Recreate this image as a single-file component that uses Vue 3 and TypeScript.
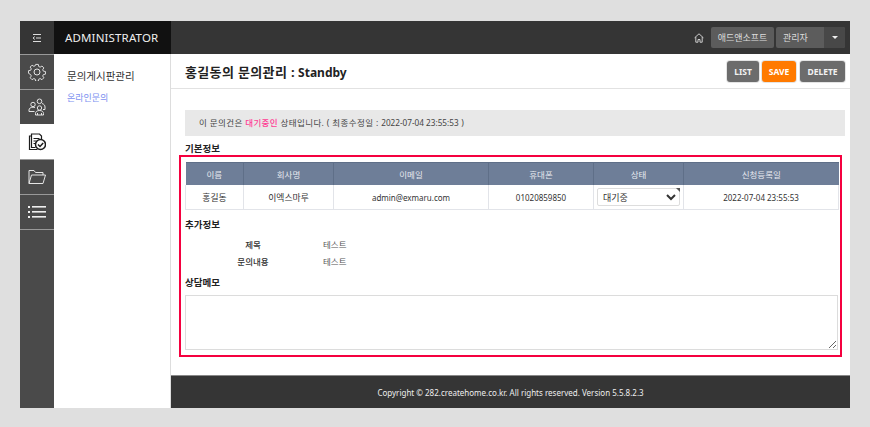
<script setup lang="ts">
const heads = ['이름', '회사명', '이메일', '휴대폰', '상태', '신청등록일']
const widths = [58, 90, 155, 105, 90, 155]
const extra = [
  { k: '제목', v: '테스트' },
  { k: '문의내용', v: '테스트' },
]
</script>

<template>
  <div class="page">
    <div class="win">
      <nav class="rail">
        <div class="rail-top">
          <svg width="10" height="10" viewBox="0 0 10 10" fill="none" stroke="#ddd" stroke-width="1">
            <path d="M1 1.500h8M4 5h5M1 8.500h8M2.800 3.600 1 5l1.800 1.400" />
          </svg>
        </div>
        <div class="rail-item">
          <svg width="18" height="18" viewBox="0 0 18 18" fill="none" stroke="#e4e4e4" stroke-width="1">
            <circle cx="9" cy="9" r="3" />
            <path d="M7.600 1h2.800l.4 2.200 1.500.7 1.900-1.200 2 2-1.200 1.900.7 1.500 2.200.4v2.800l-2.200.4-.7 1.500 1.200 1.900-2 2-1.900-1.200-1.500.7-.4 2.200H7.600l-.4-2.200-1.500-.7-1.900 1.200-2-2 1.200-1.900-.7-1.500L.1 10.400V7.600l2.200-.4.7-1.500L1.800 3.800l2-2 1.900 1.200 1.500-.7z" transform="translate(.45 .45) scale(.95)" />
          </svg>
        </div>
        <div class="rail-item">
          <svg width="18" height="18" viewBox="0 0 18 18" fill="none" stroke="#e4e4e4" stroke-width="1">
            <circle cx="11.500" cy="3.300" r="2.300" />
            <circle cx="5" cy="6.500" r="2.200" />
            <circle cx="11.500" cy="10" r="2.200" />
            <path d="M14 5.500c2 .6 3 1.900 3 3.500v2.500h-2M1 13.500V12c0-1.600 1.500-2.800 4-2.800 .8 0 1.500.2 2 .5M6.500 13.500H1M7.500 17v-1.500c0-1.800 1.600-3 4-3s4 1.200 4 3V17zM9.500 17v-2M13.500 17v-2" />
          </svg>
        </div>
        <div class="rail-item active">
          <svg width="18" height="18" viewBox="0 0 18 18" fill="none" stroke="#1c1c1c" stroke-width="1.200">
            <path d="M3.500 3V1h8l2 2v3M3.500 3H1.500v13.500h8" />
            <path d="M3.500 3v11.500h4M5.500 5.500h6M5.500 8h3M5.500 10.500h2" />
            <circle cx="12.500" cy="11.500" r="5" stroke-width="1.500" />
            <path d="M10 11.500l2 2 3.200-3.500" stroke-width="1.500" />
          </svg>
        </div>
        <div class="rail-item">
          <svg width="18" height="16" viewBox="0 0 18 16" fill="none" stroke="#e4e4e4" stroke-width="1">
            <path d="M1 14.500V1.500h5l1.500 2H15v2.500" />
            <path d="M1 14.500 3.500 6h14L15 14.500z" />
          </svg>
        </div>
        <div class="rail-item">
          <svg width="18" height="14" viewBox="0 0 18 14" fill="#eee">
            <rect x="0" y="1" width="2" height="2" />
            <rect x="4" y="1" width="14" height="1.600" />
            <rect x="0" y="6" width="2" height="2" />
            <rect x="4" y="6" width="14" height="1.600" />
            <rect x="0" y="11" width="2" height="2" />
            <rect x="4" y="11" width="14" height="1.600" />
          </svg>
        </div>
        <div class="rail-rest"></div>
      </nav>

      <aside class="side">
        <div class="brand">ADMINISTRATOR</div>
        <div class="side-body">
          <div class="side-title">문의게시판관리</div>
          <a class="side-link">온라인문의</a>
        </div>
      </aside>

      <div class="main">
        <header class="topbar">
          <svg class="home" width="10" height="10" viewBox="0 0 10 10" fill="none" stroke="#ddd" stroke-width=".9">
            <path d="M.6 4.800 5 .8l4.400 4M1.800 4v5.200h2.200V6.500h2v2.700h2.200V4" />
          </svg>
          <span class="tb-btn shop">애드앤소프트</span>
          <span class="tb-split">
            <span class="tb-name">관리자</span>
            <span class="tb-caret"><i></i></span>
          </span>
        </header>

        <section class="titlebar">
          <h1><span class="h1-ko">홍길동의 문의관리 :</span> Standby</h1>
          <div class="actions">
            <button class="btn list">LIST</button>
            <button class="btn save">SAVE</button>
            <button class="btn del">DELETE</button>
          </div>
        </section>

        <section class="content">
          <div class="notice">
            이 문의건은 <b>대기중인</b> 상태입니다. ( 최종수정일 : <span class="stamp">2022-07-04 23:55:53</span> )
          </div>
          <div class="highlight"></div>
          <h2 class="h-basic">기본정보</h2>
          <table class="grid">
            <colgroup>
              <col v-for="(w, i) in widths" :key="i" :style="{ width: w + 'px' }" />
            </colgroup>
            <thead>
              <tr>
                <th v-for="h in heads" :key="h">{{ h }}</th>
              </tr>
            </thead>
            <tbody>
              <tr>
                <td class="ko">홍길동</td>
                <td class="ko">이엑스마루</td>
                <td>admin@exmaru.com</td>
                <td>01020859850</td>
                <td class="sel-cell">
                  <span class="sel-wrap">
                    <select>
                      <option>대기중</option>
                      <option>완료</option>
                    </select>
                    <i class="corner"></i>
                  </span>
                </td>
                <td>2022-07-04 23:55:53</td>
              </tr>
            </tbody>
          </table>

          <h2 class="h-extra">추가정보</h2>
          <dl class="extra">
            <div v-for="r in extra" :key="r.k" class="extra-row">
              <dt>{{ r.k }}</dt>
              <dd>{{ r.v }}</dd>
            </div>
          </dl>

          <h2 class="h-memo">상담메모</h2>
          <textarea class="memo"></textarea>
        </section>

        <footer class="foot">Copyright © 282.createhome.co.kr. All rights reserved. Version 5.5.8.2.3</footer>
      </div>
    </div>
  </div>
</template>

<style>
html, body { margin: 0; background: #dfdfdf; }
</style>

<style scoped>
.page {
  width: 870px;
  height: 427px;
  box-sizing: border-box;
  padding: 21px 20px 19px;
  background: #dfdfdf;
  font-family: "Noto Sans", "Noto Sans CJK KR", sans-serif;
  overflow: hidden;
}
.win { display: flex; height: 387px; background: #fff; }

.rail { width: 34px; display: flex; flex-direction: column; flex: none; }
.rail-top { height: 33px; background: #353535; display: flex; align-items: center; justify-content: center; flex: none; }
.rail-item {
  height: 34px;
  flex: none;
  margin-top: 1px;
  background: #4a4a4a;
  display: flex;
  align-items: center;
  justify-content: center;
  box-shadow: 0 -1px 0 #999;
}
.rail-item.active { background: #fff; box-shadow: none; }
.rail-rest { flex: 1; margin-top: 1px; background: #4a4a4a; box-shadow: 0 -1px 0 #999; }

.side { width: 117px; flex: none; display: flex; flex-direction: column; }
.brand {
  height: 33px;
  background: #111;
  color: #eee;
  font-size: 11.500px;
  line-height: 33px;
  padding-left: 11px;
  letter-spacing: .15px;
}
.side-body { flex: 1; border-right: 1px solid #ddd; padding-top: 15px; padding-left: 13px; }
.side-title { font-size: 10.500px; line-height: 14px; color: #333; }
.side-link { display: block; margin-top: 9px; font-size: 9px; line-height: 12px; color: #7c90f0; }

.main { flex: 1; min-width: 0; display: flex; flex-direction: column; position: relative; }
.topbar {
  height: 33px;
  flex: none;
  background: #353535;
  display: flex;
  align-items: center;
  justify-content: flex-end;
  padding-right: 5px;
  box-sizing: border-box;
}
.home { margin-right: 7px; }
.tb-btn, .tb-split { height: 21px; border-radius: 2px; background: #5c5c5c; color: #ddd; font-size: 9px; line-height: 21px; }
.shop { width: 63px; text-align: center; margin-right: 2px; }
.tb-split { display: flex; width: 69px; overflow: hidden; }
.tb-name { width: 48px; padding-left: 7px; box-sizing: border-box; }
.tb-caret { flex: 1; background: #484848; display: flex; align-items: center; justify-content: center; }
.tb-caret i { width: 0; height: 0; border: 3px solid transparent; border-top: 3px solid #eee; border-bottom: 0; }

.titlebar {
  height: 35px;
  flex: none;
  box-sizing: border-box;
  border-bottom: 1px solid #e2e2e2;
  display: flex;
  align-items: center;
  justify-content: space-between;
  padding: 0 5px 1px 14px;
}
h1 { margin: 4px 0 0; font-size: 12px; font-weight: 700; color: #222; line-height: 16px; }
.h1-ko { font-size: 13px; letter-spacing: .35px; }
.actions { display: flex; gap: 3px; margin-top: 2px; }
.btn {
  height: 21px;
  border: 0;
  border-radius: 3px;
  background: #6c6c6c;
  color: #f2f2f2;
  font: 700 8.500px/21px "Noto Sans", sans-serif;
  padding: 0;
  box-shadow: 0 0 0 1px #e4e4e4;
}
.list { width: 32px; }
.save { width: 34px; margin-right: 1px; background: #ff7a00; color: #fff; }
.del { width: 45px; }

.content { flex: 1; padding: 21px 5px 0 14px; position: relative; min-height: 0; }
.notice {
  height: 26px;
  line-height: 25px;
  background: #e8e8e8;
  font-size: 8.500px;
  letter-spacing: .38px;
  color: #444;
  padding-left: 14px;
}
.notice b { font-weight: 500; color: #ff3d94; }
.stamp { font-size: 8.200px; letter-spacing: 0; }
.highlight {
  position: absolute;
  left: 8px;
  top: 66px;
  width: 663px;
  height: 202px;
  box-sizing: border-box;
  border: 2.500px solid #f5003f;
  pointer-events: none;
}
h2 { margin: 0; font-size: 9.500px; font-weight: 700; color: #222; line-height: 12px; }
.h-basic { margin-top: 7px; }
.grid {
  margin-top: 7px;
  table-layout: fixed;
  width: 653px;
  border-collapse: collapse;
  font-size: 8px;
  color: #333;
  text-align: center;
}
th {
  height: 23px;
  padding: 0;
  background: #6e7e98;
  color: #e6e9ef;
  font-size: 8.500px;
  font-weight: 400;
  border-left: 1px solid #5f6f88;
  box-shadow: inset 0 1px 0 #5f6f88;
}
th:first-child { border-left: 0; }
td {
  height: 24px;
  padding: 0;
  border: 1px solid #e2e4e9;
  border-top: 0;
}
td.ko { font-size: 8.800px; }
.sel-cell { padding: 0 3px; }
.sel-wrap { display: block; position: relative; height: 18px; }
select {
  width: 100%;
  height: 18px;
  box-sizing: border-box;
  display: block;
  border: 1px solid #ddd;
  border-radius: 2px;
  background: #fff;
  font: 9px "Noto Sans", "Noto Sans CJK KR", sans-serif;
  color: #333;
  padding: 0 0 0 1px;
}
.corner {
  position: absolute;
  right: 0;
  top: 0;
  border-top: 4px solid #555;
  border-left: 4px solid transparent;
}
.h-extra { margin-top: 9px; }
.extra { margin: 5px 0 0; }
.extra-row { display: flex; height: 17px; line-height: 17px; font-size: 8.500px; }
dt { width: 96px; margin-left: 20px; color: #333; font-weight: 500; text-align: center; }
dd { margin: 0 0 0 22px; color: #555; }
.h-memo { margin-top: 7px; }
.memo {
  display: block;
  width: 653px;
  height: 55px;
  margin-top: 6px;
  box-sizing: border-box;
  border: 1px solid #dcdcdc;
  outline: none;
  padding: 2px;
  background: #fff;
}

.foot {
  height: 33px;
  flex: none;
  box-sizing: border-box;
  border-top: 1px solid #888;
  padding-top: 1px;
  background: #353535;
  color: #eee;
  font-size: 8px;
  line-height: 31px;
  text-align: center;
}
</style>
